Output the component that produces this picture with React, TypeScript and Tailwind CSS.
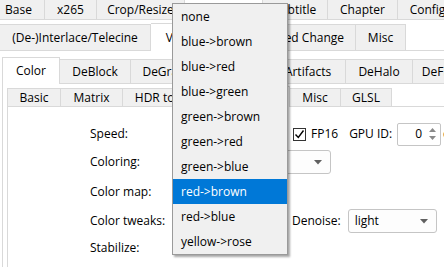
import clsx from 'clsx';

const items = ['none', 'blue->brown', 'blue->red', 'blue->green', 'green->brown', 'green->red', 'green->blue', 'red->brown', 'red->blue', 'yellow->rose'];

function Tab({ w, h, sel, first, children }: { w: string; h: string; sel?: boolean; first?: boolean; children: React.ReactNode }) {
  return (
    <div
      className={clsx(
        'flex shrink-0 items-center justify-center whitespace-nowrap border-t border-r border-[#d9d9d9]',
        first && 'border-l',
        w,
        h,
        sel ? 'relative z-10 -mb-px bg-white' : 'bg-[#f0f0f0]'
      )}
    >
      {children}
    </div>
  );
}

function Arrow() {
  return (
    <svg width="8" height="5" viewBox="0 0 8 5">
      <path d="M0 0h8L4 4.5z" fill="#606060" />
    </svg>
  );
}

function Combo({ w, text }: { w: string; text?: string }) {
  return (
    <div className={clsx('flex h-[24px] items-center justify-between rounded-[3px] border border-[#c5c5c5] bg-[#fdfdfd] pl-[6px] pr-[8px]', w)}>
      <span>{text}</span>
      <Arrow />
    </div>
  );
}

function EdgeBox() {
  return <div className="h-[13px] w-[13px] border border-[#6e6e6e] bg-white" />;
}

export default function App() {
  return (
    <div className="relative h-[267px] w-[444px] overflow-hidden bg-white font-['Open_Sans',sans-serif] text-[12px] leading-none text-black">
      {/* main tabs */}
      <div className="flex h-[20px] border-b border-[#d9d9d9]">
        <div className="flex w-[45px] shrink-0 items-center justify-center border-r border-[#d9d9d9] bg-[#f0f0f0] pr-[7px]">Base</div>
        <div className="flex w-[52px] shrink-0 items-center justify-center border-r border-[#d9d9d9] bg-[#f0f0f0]">x265</div>
        <div className="flex w-[88px] shrink-0 items-center justify-center border-r border-[#d9d9d9] bg-[#f0f0f0]">Crop/Resize</div>
        <div className="flex w-[78px] shrink-0 items-center justify-center border-r border-[#d9d9d9] bg-white">Filtering</div>
        <div className="flex w-[65px] shrink-0 items-center justify-center border-r border-[#d9d9d9] bg-[#f0f0f0]">Subtitle</div>
        <div className="flex w-[70px] shrink-0 items-center justify-center border-r border-[#d9d9d9] bg-[#f0f0f0]">Chapter</div>
        <div className="flex w-[60px] shrink-0 items-center justify-center border-r border-[#d9d9d9] bg-[#f0f0f0]">Config</div>
      </div>

      <div className="pt-[4px]">
        <div className="flex h-[27px] items-end border-b border-[#d9d9d9]">
          <Tab w="w-[151px]" h="h-[26px]">(De-)Interlace/Telecine</Tab>
          <Tab w="w-[102px]" h="h-[28px]" sel>Vapoursynth</Tab>
          <Tab w="w-[103px]" h="h-[26px]">Speed Change</Tab>
          <Tab w="w-[50px]" h="h-[26px]">Misc</Tab>
        </div>

        <div className="ml-[2px] pt-[6px]">
          <div className="flex h-[27px] items-end border-b border-[#d9d9d9]">
            <Tab w="w-[58px]" h="h-[27px]" sel first>Color</Tab>
            <Tab w="w-[71px]" h="h-[24px]">DeBlock</Tab>
            <Tab w="w-[70px]" h="h-[24px]">DeGrain</Tab>
            <Tab w="w-[70px]" h="h-[24px]">DeNoise</Tab>
            <Tab w="w-[75px]" h="h-[24px]">Artifacts</Tab>
            <Tab w="w-[67px]" h="h-[24px]">DeHalo</Tab>
            <Tab w="w-[70px]" h="h-[24px]">DeFlicker</Tab>
          </div>

          <div className="h-[200px] border-l border-[#d9d9d9]">
            <div className="ml-[4px] flex h-[23px] items-end border-b border-[#d9d9d9]">
              <Tab w="w-[54px]" h="h-[18px]" first>Basic</Tab>
              <Tab w="w-[62px]" h="h-[18px]">Matrix</Tab>
              <Tab w="w-[90px]" h="h-[18px]">HDR to SDR</Tab>
              <Tab w="w-[77px]" h="h-[21px]" sel>Colorize</Tab>
              <Tab w="w-[51px]" h="h-[18px]">Misc</Tab>
              <Tab w="w-[51px]" h="h-[18px]">GLSL</Tab>
            </div>

            <div className="ml-[4px] h-[180px] border-l border-[#d9d9d9] pt-[13px]">
              <div className="grid grid-cols-[82px_98px_100px_154px_20px] grid-rows-[28px_28px_32px_26px_28px] items-center">
                {/* Speed */}
                <div />
                <div>Speed:</div>
                <div />
                <div className="flex items-center pl-[5px]">
                  <div className="flex h-[13px] w-[13px] items-center justify-center border border-[#333] bg-white">
                    <svg width="11" height="11" viewBox="0 0 11 11">
                      <path d="M1.5 5.5l2.8 3L9.5 1.5" fill="none" stroke="#000" strokeWidth="1.4" />
                    </svg>
                  </div>
                  <span className="ml-[5px]">FP16</span>
                  <span className="ml-[11px]">GPU ID:</span>
                  <div className="ml-[5px] flex h-[23px] w-[44px] items-center rounded-[2px] border border-[#c5c5c5] bg-white">
                    <span className="flex-1 pr-[4px] text-right">0</span>
                    <div className="flex h-full w-[14px] flex-col items-center justify-center gap-[4px] pr-[2px]">
                      <svg width="7" height="4" viewBox="0 0 7 4"><path d="M0 4h7L3.5 0z" fill="#8a8a8a" /></svg>
                      <svg width="7" height="4" viewBox="0 0 7 4"><path d="M0 0h7L3.5 4z" fill="#8a8a8a" /></svg>
                    </div>
                  </div>
                </div>
                <div className="pl-[1px]">c</div>

                {/* Coloring */}
                <div />
                <div>Coloring:</div>
                <div className="col-span-2 pl-[2px]">
                  <Combo w="w-[141px]" />
                </div>
                <div className="pl-[2px]"><EdgeBox /></div>

                {/* Color map */}
                <div />
                <div>Color map:</div>
                <div />
                <div />
                <div className="pl-[2px]"><EdgeBox /></div>

                {/* Color tweaks */}
                <div />
                <div>Color tweaks:</div>
                <div />
                <div className="flex items-center pl-[4px]">
                  <span>Denoise:</span>
                  <div className="ml-[7px]">
                    <Combo w="w-[89px]" text="light" />
                  </div>
                </div>
                <div className="pl-[2px]"><EdgeBox /></div>

                {/* Stabilize */}
                <div />
                <div>Stabilize:</div>
                <div />
                <div />
                <div className="pl-[2px]"><EdgeBox /></div>
              </div>
            </div>
          </div>
        </div>
      </div>

      {/* open combo popup */}
      <div className="absolute left-[172px] top-[3px] z-20 w-[116px] border border-[#9a9a9a] bg-[#f0f0f0] shadow-[2px_2px_2px_rgba(0,0,0,0.35)]">
        {items.map((it) => (
          <div
            key={it}
            className={clsx('flex h-[25px] items-center pl-[8px]', it === 'red->brown' && 'bg-[#0078d7] text-white')}
          >
            {it}
          </div>
        ))}
      </div>
    </div>
  );
}
